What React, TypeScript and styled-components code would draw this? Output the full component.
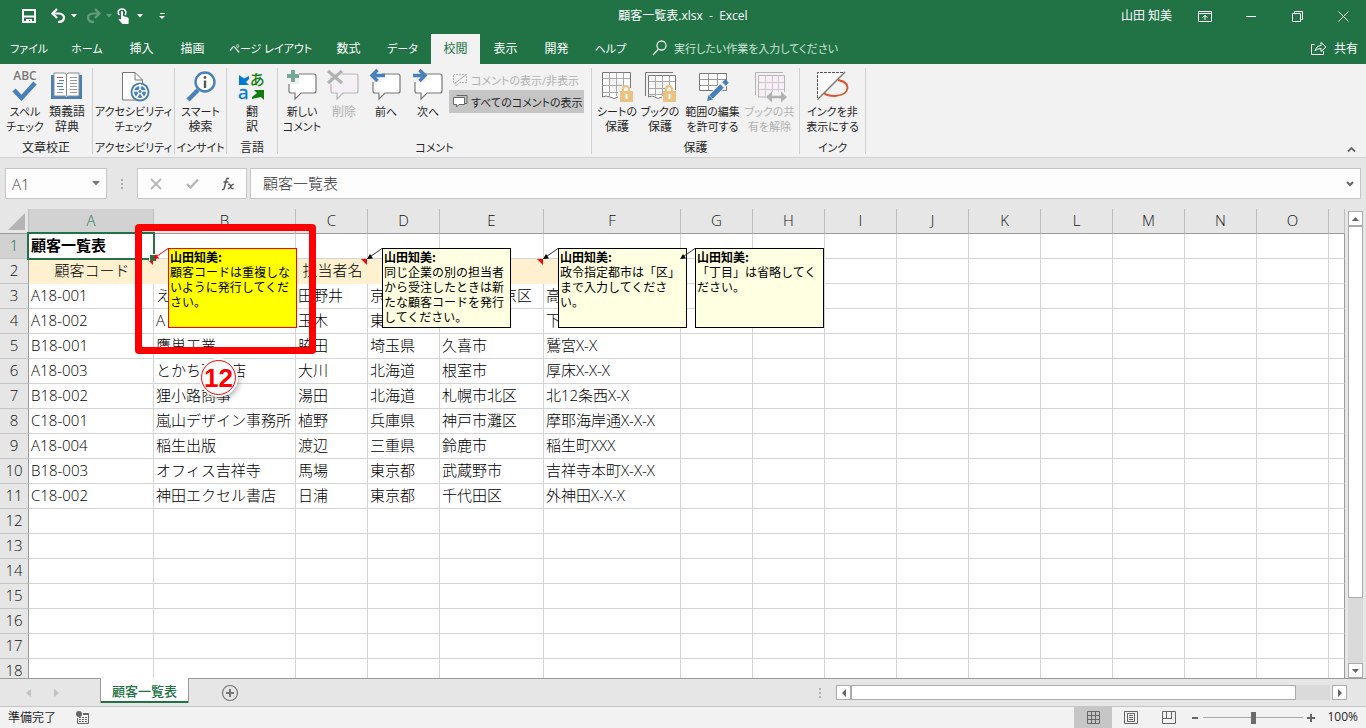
import React from "react";
import styled, { createGlobalStyle, css } from "styled-components";

const GREEN = "#217346";
const BLUE = "#4a80ba";
const GRAY = "#777777";

const GlobalStyle = createGlobalStyle`
  * { box-sizing: border-box; }
  body {
    margin: 0;
    font-family: "Open Sans", "Noto Sans CJK JP", sans-serif;
    font-size: 12px;
    font-feature-settings: "palt";
    color: #262626;
    overflow: hidden;
  }
  button, input {
    font: inherit;
    font-feature-settings: inherit;
    color: inherit;
    border: 0;
    padding: 0;
    margin: 0;
    background: none;
    border-radius: 0;
    outline: none;
  }
  svg { display: block; flex: none; overflow: visible; }
`;

const App = styled.div`
  display: flex;
  flex-direction: column;
  height: 100vh;
  background: #e6e6e6;
`;

/* ---------- title bar ---------- */
const TitleBar = styled.header`
  display: grid;
  grid-template-columns: 1fr auto 1fr;
  align-items: center;
  height: 32px;
  background: ${GREEN};
  color: #fff;
`;
const QuickAccess = styled.div`
  display: flex;
  align-items: center;
  padding-left: 21px;
`;
const QuickButton = styled.button<{ $w: number; $dim?: boolean }>`
  display: flex;
  width: ${(p) => p.$w}px;
  height: 32px;
  align-items: center;
  opacity: ${(p) => (p.$dim ? 0.3 : 1)};
`;
const FileTitle = styled.h1`
  margin: 0;
  padding-bottom: 2px;
  font-size: 12px;
  font-weight: 400;
  white-space: pre;
`;
const WindowControls = styled.div`
  display: flex;
  align-items: center;
  justify-content: flex-end;
`;
const UserName = styled.button`
  margin-right: 10px;
  padding-bottom: 2px;
  color: #fff;
`;
const WindowButton = styled.button`
  display: flex;
  width: 46px;
  height: 32px;
  align-items: center;
  justify-content: center;
`;

/* ---------- ribbon tabs ---------- */
const TabBar = styled.nav`
  display: flex;
  align-items: flex-end;
  height: 32px;
  background: ${GREEN};
  color: #fff;
`;
const Tab = styled.button<{ $w: number; $active?: boolean }>`
  width: ${(p) => p.$w}px;
  height: 30px;
  padding-bottom: 2px;
  white-space: nowrap;
  ${(p) => p.$active && css`background: #f2f2f2; color: ${GREEN};`}
`;
const Search = styled.label`
  display: flex;
  align-items: center;
  gap: 6px;
  height: 30px;
  margin-left: 13px;
  padding-bottom: 2px;
  flex: 1;
  input { width: 220px; height: 24px; font-size: 11px; }
  input::placeholder { color: #cfe3d7; opacity: 1; }
`;
const Share = styled.button`
  display: flex;
  align-items: center;
  gap: 7px;
  height: 30px;
  padding: 0 8px 2px 0;
`;

/* ---------- ribbon ---------- */
const Ribbon = styled.section`
  display: flex;
  height: 94px;
  background: #f2f2f2;
  border-bottom: 1px solid #d2d2d2;
`;
const Group = styled.div<{ $w: number }>`
  display: flex;
  flex-direction: column;
  width: ${(p) => p.$w}px;
  height: 86px;
  margin-top: 4px;
  padding-top: 2px;
  border-right: 1px solid #d0d0d0;
`;
const GroupBody = styled.div<{ $start?: boolean }>`
  display: flex;
  justify-content: ${(p) => (p.$start ? "flex-start" : "center")};
  padding-left: ${(p) => (p.$start ? 3 : 0)}px;
  flex: 1;
`;
const GroupLabel = styled.div`
  height: 13px;
  line-height: 13px;
  text-align: center;
  white-space: nowrap;
`;
const Line = styled.span<{ $kana: boolean; $block?: boolean }>`
  display: ${(p) => (p.$block ? "block" : "inline")};
  font-size: ${(p) => (p.$kana ? 11 : 12)}px;
`;
const BigButton = styled.button<{ $w: number; $dim?: boolean }>`
  display: flex;
  flex-direction: column;
  align-items: center;
  width: ${(p) => p.$w}px;
  line-height: 15px;
  white-space: nowrap;
  color: ${(p) => (p.$dim ? "#b1b1b1" : "#262626")};
  svg { margin-bottom: 2px; }
`;
const SmallStack = styled.div`
  display: flex;
  flex-direction: column;
  width: 135px;
`;
const SmallButton = styled.button<{ $on?: boolean; $dim?: boolean }>`
  display: flex;
  align-items: center;
  gap: 3px;
  height: ${(p) => (p.$on ? 23 : 20)}px;
  padding-left: 4px;
  font-size: 11px;
  white-space: nowrap;
  background: ${(p) => (p.$on ? "#c5c5c5" : "transparent")};
  color: ${(p) => (p.$dim ? "#b1b1b1" : "#262626")};
`;
const Collapse = styled.button`
  margin: auto 10px 4px auto;
`;

/* ---------- formula bar ---------- */
const FormulaBar = styled.section`
  display: flex;
  height: 51px;
  padding: 10px 5px 10px 5px;
  font-size: 15px;
  font-weight: 300;
  font-feature-settings: normal;
`;
const Box = styled.div<{ $w?: number }>`
  display: flex;
  align-items: center;
  width: ${(p) => (p.$w ? `${p.$w}px` : "auto")};
  flex: ${(p) => (p.$w ? "none" : 1)};
  background: #fdfdfd;
  border: 1px solid #c6c6c6;
  input { flex: 1; min-width: 0; height: 28px; }
`;
const NameInput = styled.input`
  padding-left: 6px;
  color: #444;
`;
const FormulaInput = styled.input`
  padding: 0 0 2px 12px;
  color: #333;
`;
const Grip = styled.svg`
  margin: 10px 13px 0 13px;
`;
const FormulaButtons = styled(Box)`
  justify-content: space-around;
  margin-right: 3px;
`;
const SideButton = styled.button`
  width: 20px;
  display: flex;
  justify-content: center;
`;

/* ---------- sheet ---------- */
const Work = styled.main`
  display: flex;
  flex: 1;
  min-height: 0;
`;
const Canvas = styled.div`
  position: relative;
  flex: 1;
  overflow: hidden;
`;
const Grid = styled.table`
  table-layout: fixed;
  width: 100%;
  border-collapse: separate;
  border-spacing: 0;
  font-size: 15px;
  font-feature-settings: normal;
`;
const ColHead = styled.th<{ $active?: boolean }>`
  height: 25px;
  padding: 0 0 2px;
  line-height: 22px;
  font-weight: 300;
  color: ${(p) => (p.$active ? GREEN : "#111")};
  background: ${(p) => (p.$active ? "#d2d2d2" : "#e6e6e6")};
  border-right: 1px solid #bdbdbd;
  border-bottom: 1px solid #9b9b9b;
`;
const Corner = styled(ColHead)`
  svg { margin: 3px 0 0 8px; }
`;
const RowHead = styled.th<{ $active?: boolean }>`
  height: 25px;
  padding: 0 0 2px;
  line-height: 22px;
  font-weight: 300;
  color: ${(p) => (p.$active ? GREEN : "#111")};
  background: ${(p) => (p.$active ? "#d2d2d2" : "#e6e6e6")};
  border-right: 1px solid #9b9b9b;
  border-bottom: 1px solid #c4c4c4;
`;
const Cell = styled.td<{ $head?: boolean; $title?: boolean; $last?: boolean }>`
  position: relative;
  height: 25px;
  padding: 0 0 2px 2px;
  line-height: 22px;
  white-space: nowrap;
  font-weight: ${(p) => (p.$title ? 700 : 300)};
  color: #000;
  text-align: ${(p) => (p.$head ? "center" : "left")};
  background: ${(p) => (p.$head ? "#fff0d0" : "#fff")};
  border-right: 1px solid ${(p) => (p.$head ? "#fff0d0" : p.$last ? "#9b9b9b" : "#d4d4d4")};
  border-bottom: 1px solid ${(p) => (p.$head ? "#fff0d0" : "#d4d4d4")};
`;
const Flag = styled.i`
  position: absolute;
  top: 0;
  right: 0;
  border-top: 6px solid #f00;
  border-left: 6px solid transparent;
`;
const Selection = styled.div`
  position: absolute;
  z-index: 1;
  inset: -2px;
  border: 2px solid ${GREEN};
  &::after {
    content: "";
    position: absolute;
    right: -3px;
    bottom: -3px;
    width: 6px;
    height: 6px;
    background: ${GREEN};
    border: solid #fff;
    border-width: 1px 0 0 1px;
  }
`;
const Note = styled.aside<{ $x: number; $hot?: boolean }>`
  position: absolute;
  z-index: 2;
  left: ${(p) => p.$x}px;
  top: 39px;
  width: 129px;
  height: 80px;
  padding: 0 1px;
  border: 1px solid ${(p) => (p.$hot ? "#f00" : "#000")};
  background: ${(p) => (p.$hot ? "#ff0" : "#ffffe1")};
  color: #000;
  font-family: "Noto Sans CJK JP", sans-serif;
  line-height: 15px;
  font-feature-settings: normal;
  white-space: pre;
  b { display: block; }
`;
const Leader = styled.svg<{ $x: number }>`
  position: absolute;
  z-index: 2;
  left: ${(p) => p.$x}px;
  top: 39px;
`;
const Highlight = styled.div`
  position: absolute;
  z-index: 3;
  left: 135px;
  top: 15px;
  width: 181px;
  height: 130px;
  border: 7px solid #f00;
  border-radius: 4px;
`;
const StepBadge = styled.div`
  position: absolute;
  z-index: 3;
  left: 201px;
  top: 151px;
  width: 35px;
  height: 35px;
  border: 1px solid #f00;
  border-radius: 50%;
  background: #fff;
  box-shadow: 0 0 0 2px #fff, 2px 3px 6px rgba(0, 0, 0, 0.4);
  color: #f00;
  font: 700 26px/34px "Liberation Sans Narrow", "Liberation Sans", sans-serif;
  text-align: center;
`;

/* ---------- scroll bars ---------- */
const VScroll = styled.div`
  display: flex;
  flex-direction: column;
  width: 15px;
  margin: 2px 3px 0 3px;
  background: #dadada;
`;
const ArrowButton = styled.button`
  display: flex;
  align-items: center;
  justify-content: center;
  flex: none;
  width: 15px;
  height: 15px;
  background: #fff;
  border: 1px solid #ababab;
`;
const VThumb = styled.div`
  flex: 373;
  background: #fff;
  border: 1px solid #ababab;
`;
const VTrack = styled.div`
  flex: 65;
`;
const SheetBar = styled.footer`
  display: flex;
  height: 29px;
  border-top: 1px solid #9b9b9b;
  border-bottom: 1px solid #c6c6c6;
`;
const SheetNav = styled.div`
  display: flex;
  align-items: center;
  gap: 23px;
  width: 100px;
  padding-left: 26px;
`;
const SheetTab = styled.button`
  width: 89px;
  height: 25px;
  margin-top: -1px;
  background: #fff;
  border: solid #9b9b9b;
  border-width: 0 1px;
  box-shadow: inset 0 -2px 0 ${GREEN};
  color: ${GREEN};
  font-size: 13px;
  font-weight: 500;
  font-feature-settings: normal;
`;
const AddSheet = styled.button`
  margin-left: 32px;
`;
const HScroll = styled.div`
  display: flex;
  align-items: center;
  width: 528px;
  margin: 0 19px 0 auto;
`;
const HTrack = styled.div`
  display: flex;
  flex: 1;
  height: 15px;
  margin-right: 2px;
  background: #dadada;
`;
const HThumb = styled.div`
  width: 93%;
  background: #fff;
  border: 1px solid #ababab;
`;

/* ---------- status bar ---------- */
const StatusBar = styled.footer`
  display: flex;
  align-items: center;
  height: 21px;
  padding: 0 8px;
  background: #f2f2f2;
`;
const Ready = styled.span`
  padding-bottom: 2px;
`;
const ViewButtons = styled.div`
  display: flex;
  margin-left: auto;
`;
const ViewButton = styled.button<{ $on?: boolean }>`
  display: flex;
  align-items: center;
  justify-content: center;
  width: 38px;
  height: 21px;
  background: ${(p) => (p.$on ? "#c6c6c6" : "transparent")};
`;
const ZoomButton = styled.button`
  width: 14px;
  display: flex;
  justify-content: center;
`;
const ZoomRange = styled.input`
  appearance: none;
  width: 100px;
  height: 12px;
  margin: 0 1px;
  background: linear-gradient(#ababab, #ababab) center / 100% 1px no-repeat;
  &::-webkit-slider-thumb {
    appearance: none;
    width: 5px;
    height: 12px;
    background: #6b6b6b;
  }
`;
const ZoomText = styled.button`
  width: 33px;
  margin-left: 7px;
  padding-bottom: 2px;
  text-align: right;
`;

/* ---------- icons ---------- */
const Caret = ({ c = "#fff", x = 0 }: { c?: string; x?: number }) => (
  <svg width={6 + x} height="4" viewBox={`${-x} 0 ${6 + x} 4`}><path d="M0 0h6L3 3.5z" fill={c} /></svg>
);
const Icon = ({ children }: { children: React.ReactNode }) => (
  <svg width="34" height="32" viewBox="0 0 34 32" fill="none">{children}</svg>
);
const bubble = "M6 4H29Q31 4 31 6V21Q31 23 29 23H16L10 29V23H6Q4 23 4 21V6Q4 4 6 4Z";

const SpellIcon = () => (
  <Icon>
    <text x="17" y="10" textAnchor="middle" fontFamily="Open Sans" fontSize="12" fontWeight="600" fill={GRAY}>ABC</text>
    <path d="M6 20L13.500 28L27 13" stroke={BLUE} strokeWidth="4.500" />
  </Icon>
);
const BookIcon = () => (
  <Icon>
    <path d="M1 5H32V29H1z" fill={BLUE} />
    <path d="M4 3H14Q16.500 3 16.500 5Q16.500 3 19 3H29V26H19Q17 26 16.500 27Q16 26 14 26H4z" fill="#fff" stroke="#8a8a8a" />
    <path d="M16.500 5V26" stroke="#8a8a8a" />
    <path d="M7 7.500H13" stroke="#d35230" />
    <path d="M9 10.500H14M7 13.500H13M9 19.500H14M7 16.500H13" stroke={BLUE} />
    <path d="M7 22.500H13M20 7.500H27M20 10.500H27M20 13.500H27M20 16.500H27M20 19.500H27M20 22.500H27" stroke="#9a9a9a" />
  </Icon>
);
const AccessIcon = () => (
  <Icon>
    <path d="M5.500 2.500H18L25.500 10V30H5.500z" fill="#fff" stroke={GRAY} />
    <path d="M18 2.500V10H25.500" stroke={GRAY} />
    <circle cx="23" cy="22" r="9.500" fill={BLUE} />
    <circle cx="23" cy="22" r="6.800" stroke="#fff" strokeWidth="1.600" />
    <path d="M23 14V22M17 21H29M23 22L19 28M23 22L27 28" stroke="#fff" strokeWidth="1.600" />
    <circle cx="23" cy="21.500" r="2" fill={BLUE} stroke="#fff" />
  </Icon>
);
const LookupIcon = () => (
  <Icon>
    <path d="M4 30L14 20" stroke={BLUE} strokeWidth="4.500" />
    <circle cx="21" cy="12" r="9.500" fill="#fff" stroke={BLUE} strokeWidth="2.400" />
    <path d="M21 10.500V18" stroke="#555" strokeWidth="2.400" />
    <circle cx="21" cy="7.500" r="1.400" fill="#555" />
  </Icon>
);
const TranslateIcon = () => (
  <Icon>
    <text x="3" y="29" fontFamily="Open Sans" fontSize="19" fill="#0078d7" stroke="#0078d7" strokeWidth="0.400">a</text>
    <text x="15" y="15" fontFamily="Noto Sans CJK JP" fontSize="15" fontWeight="500" fill="#107c10">あ</text>
    <path d="M4 5V15H14L11 12L14 9V6L9 8.500z" fill="#0078d7" />
    <path d="M19 20H29V30L26 27L17 29V27L22 23z" fill="#107c10" />
  </Icon>
);
const CommentIcon = ({ kind }: { kind: "new" | "del" | "prev" | "next" }) => {
  const dim = kind === "del";
  return (
    <Icon>
      <path d={bubble} fill={dim ? "#f6f0f6" : "#fff"} stroke={dim ? "#b5b5b5" : GRAY} strokeWidth="1.200" />
      {kind === "new" && <><path d="M1 0h13v14H1z" fill="#f2f2f2" /><path d="M8 0V12M2 6H14" stroke="#76a797" strokeWidth="4" /></>}
      {kind === "del" && <><path d="M0 0h15v14H0z" fill="#f2f2f2" opacity=".7" /><path d="M1 1L15 13M15 1L1 13" stroke="#b1b1b1" strokeWidth="3" /></>}
      {kind === "prev" && <><path d="M1 0h12v12H1z" fill="#f2f2f2" /><path d="M3 5.500H16M8.500 0L3 5.500L8.500 11" stroke={BLUE} strokeWidth="3.400" /></>}
      {kind === "next" && <><path d="M1 0h13v12H1z" fill="#f2f2f2" /><path d="M2 5.500H14M8.500 0L14 5.500L8.500 11" stroke={BLUE} strokeWidth="3.400" /></>}
    </Icon>
  );
};
const ProtectIcon = ({ double }: { double?: boolean }) => (
  <Icon>
    {double && <path d="M2.500 26V2.500H30" stroke={GRAY} />}
    <path d={double ? "M5.500 5.500H32.500V20M5.500 5.500V27Q9 25 12 27Q15 30 19 27" : "M2.500 2.500H30.500V18M2.500 2.500V27Q6 25 10 27Q14 30 18 27"} fill="#fff" stroke={GRAY} />
    <path d={double ? "M5.500 11.500H32M5.500 18.500H24M5.500 24.500H19M12.500 5.500V26M19.500 5.500V26M26.500 5.500V16" : "M2.500 8.500H30M2.500 15.500H22M2.500 22.500H18M9.500 2.500V26M16.500 2.500V26M23.500 2.500V16"} stroke="#a9a9a9" />
    <path d="M23 22V19Q23 16 26 16Q29 16 29 19V22" stroke="#eac282" strokeWidth="2" />
    <path d="M20 21H33V32H20z" fill="#eac282" />
    <path d="M26.500 24V29" stroke="#fff" strokeWidth="2" />
  </Icon>
);
const RangeIcon = () => (
  <Icon>
    <path d="M3.500 3.500H30.500V20.500H3.500z" fill="#fff" stroke={GRAY} />
    <path d="M3.500 9.500H30M3.500 15.500H30M12.500 3.500V20M21.500 3.500V20" stroke="#999" />
    <path d="M13 29L29 13" stroke="#f2f2f2" strokeWidth="7" />
    <path d="M15 27L26 16" stroke={BLUE} strokeWidth="5" />
    <path d="M11 31L12.500 25L17 29.500z" fill={BLUE} />
    <path d="M28 14L31 11" stroke={BLUE} strokeWidth="5" />
  </Icon>
);
const UnshareIcon = () => (
  <Icon>
    <path d="M2.500 25V2.500H30" stroke="#b5b5b5" />
    <path d="M5.500 5.500H31.500V27H5.500z" fill="#f6f0f6" stroke="#b5b5b5" />
    <path d="M5.500 12.500H31M5.500 19.500H31M12.500 5.500V27M19.500 5.500V27M25.500 5.500V27" stroke="#cfc9cf" />
    <path d="M13 22H34V32H13z" fill="#f2f2f2" />
    <path d="M16 27H32" stroke="#b1b1b1" strokeWidth="2.600" />
    <path d="M13 27L19 21.500V32.500zM34 27L28 21.500V32.500z" fill="#b1b1b1" />
  </Icon>
);
const InkIcon = () => (
  <Icon>
    <path d="M1.500 29V2.500H29z" fill="#fff" />
    <path d="M1.500 28V2.500H28" stroke="#555" strokeDasharray="3 1" />
    <path d="M1.500 29.500L29 2" stroke={GRAY} strokeWidth="1.500" />
    <path d="M22 10Q32 12 31.500 18Q31 25 19 26Q11 26 8 23" stroke="#d9532f" strokeWidth="1.800" />
  </Icon>
);

/* ---------- data ---------- */
const TABS: [string, number][] = [
  ["ファイル", 58], ["ホーム", 58], ["挿入", 51], ["描画", 51], ["ページ レイアウト", 105], ["数式", 51],
  ["データ", 57], ["校閲", 49], ["表示", 51], ["開発", 51], ["ヘルプ", 57],
];
const COLS: [string, number][] = [
  ["A", 125], ["B", 142], ["C", 72], ["D", 72], ["E", 104], ["F", 137], ["G", 72], ["H", 72],
  ["I", 72], ["J", 72], ["K", 72], ["L", 72], ["M", 72], ["N", 72], ["O", 72],
];
const ROWS: string[][] = [
  ["顧客一覧表"],
  ["顧客コード", "", "担当者名", "", "", ""],
  ["A18-001", "え", "田野井", "京", "京都市右京区", "高"],
  ["A18-002", "A", "玉木", "東", "", "下"],
  ["B18-001", "鷹巣工業", "脇田", "埼玉県", "久喜市", "鷲宮X-X"],
  ["A18-003", "とかち百貨店", "大川", "北海道", "根室市", "厚床X-X-X"],
  ["B18-002", "狸小路商事", "湯田", "北海道", "札幌市北区", "北12条西X-X"],
  ["C18-001", "嵐山デザイン事務所", "植野", "兵庫県", "神戸市灘区", "摩耶海岸通X-X-X"],
  ["A18-004", "稲生出版", "渡辺", "三重県", "鈴鹿市", "稲生町XXX"],
  ["B18-003", "オフィス吉祥寺", "馬場", "東京都", "武蔵野市", "吉祥寺本町X-X-X"],
  ["C18-002", "神田エクセル書店", "日浦", "東京都", "千代田区", "外神田X-X-X"],
];
const NOTES = [
  { x: 168, hot: true, text: "顧客コードは重複しな\nいように発行してくだ\nさい。" },
  { x: 382, text: "同じ企業の別の担当者\nから受注したときは新\nたな顧客コードを発行\nしてください。" },
  { x: 558, text: "政令指定都市は「区」\nまで入力してくださ\nい。" },
  { x: 695, text: "「丁目」は省略してく\nださい。" },
];
const FLAGGED = [0, 2, 4, 5];

/* Kana glyphs are set one step smaller than kanji-only captions. */
const hasKana = (s: string) => /[ぁ-ヶ]/.test(s);
const Caption = ({ text }: { text: string }) => (
  <span>{text.split("\n").map((l) => <Line key={l} $block $kana={hasKana(l)}>{l}</Line>)}</span>
);
const Label = ({ text }: { text: string }) => (
  <GroupLabel><Line $kana={hasKana(text)}>{text}</Line></GroupLabel>
);

export default function ExcelWindow() {
  return (
    <App>
      <GlobalStyle />
      <TitleBar>
        <QuickAccess>
          <QuickButton $w={30} aria-label="上書き保存">
            <svg width="16" height="16" viewBox="0 0 16 16" fill="none" stroke="#fff" strokeWidth="2">
              <path d="M2 2H14V14H2zM2 8.500H14" /><path d="M5 11H11V14H9V12H8V14H5z" fill="#fff" stroke="none" />
            </svg>
          </QuickButton>
          <QuickButton $w={35} aria-label="元に戻す">
            <svg width="16" height="16" viewBox="0 0 16 16" fill="none" stroke="#fff" strokeWidth="2.200">
              <path d="M6 1L1.500 5.500L6 10M2 5.500H8Q13 6 13 10Q12.500 14 7 14" />
            </svg>
            <Caret x={4} />
          </QuickButton>
          <QuickButton $w={31} $dim aria-label="やり直し">
            <svg width="16" height="16" viewBox="0 0 16 16" fill="none" stroke="#fff" strokeWidth="2.200">
              <path d="M9 1L13.500 5.500L9 10M13 5.500H7Q2 6 2 10Q2.500 14 8 14" />
            </svg>
            <Caret x={4} />
          </QuickButton>
          <QuickButton $w={42} aria-label="タッチ/マウス モードの切り替え">
            <svg width="14" height="17" viewBox="0 0 14 17">
              <path d="M2.500 7Q.800 5.500 1.200 3.500Q2 1 5 1Q8 1 8.800 3.500Q9 5.500 8 7" fill="none" stroke="#fff" strokeWidth="1.500" />
              <path d="M4 3.500Q5 2.600 6 3.500V8L11 9.500Q12 10 11.700 12L11.500 16H5.500L1.500 11.500Q1.500 10 4 11.500z" fill="#fff" />
            </svg>
            <Caret x={6} />
          </QuickButton>
          <QuickButton $w={10} aria-label="クイック アクセス ツール バーのユーザー設定">
            <svg width="7" height="8" viewBox="0 0 7 8"><path d="M1 1.500H6" stroke="#fff" /><path d="M0 4H6L3 7z" fill="#fff" /></svg>
          </QuickButton>
        </QuickAccess>
        <FileTitle>顧客一覧表.xlsx  -  Excel</FileTitle>
        <WindowControls>
          <UserName>山田 知美</UserName>
          <WindowButton aria-label="リボンの表示オプション">
            <svg width="14" height="11" viewBox="0 0 14 11" fill="none" stroke="#fff"><path d="M.500.500H13.500V10.500H.500zM.500 2.500H13.500M7 9V4.500M4.500 6.500L7 4.500L9.500 6.500" /></svg>
          </WindowButton>
          <WindowButton aria-label="最小化"><svg width="10" height="1"><rect width="10" height="1" fill="#fff" /></svg></WindowButton>
          <WindowButton aria-label="元に戻す (縮小)">
            <svg width="11" height="11" viewBox="0 0 11 11" fill="none" stroke="#fff"><path d="M.500 2.500H8.500V10.500H.500zM2.500 2V.500H10.500V8.500H9" /></svg>
          </WindowButton>
          <WindowButton aria-label="閉じる">
            <svg width="11" height="11" viewBox="0 0 11 11" stroke="#fff"><path d="M.500.500L10.500 10.500M10.500.500L.500 10.500" /></svg>
          </WindowButton>
        </WindowControls>
      </TitleBar>

      <TabBar>
        {TABS.map(([t, w]) => (
          <Tab key={t} $w={w} $active={t === "校閲"}><Line $kana={hasKana(t)}>{t}</Line></Tab>
        ))}
        <Search>
          <svg width="16" height="16" viewBox="0 0 16 16" fill="none" stroke="#e4efe8" strokeWidth="1.300"><circle cx="9.500" cy="5.500" r="4.500" /><path d="M6.500 9L1 15" /></svg>
          <input placeholder="実行したい作業を入力してください" aria-label="実行したい作業を入力してください" />
        </Search>
        <Share>
          <svg width="16" height="14" viewBox="0 0 16 14" fill="none" stroke="#fff"><path d="M3.500 3.500H.500V13.500H12.500V10M4 10Q5 5 10 4.500V1.500L15 6L10 10.500V7.500Q6 7.500 4 10z" /></svg>
          共有
        </Share>
      </TabBar>

      <Ribbon>
        <Group $w={93}>
          <GroupBody>
            <BigButton $w={42}><SpellIcon /><Caption text={"スペル\nチェック"} /></BigButton>
            <BigButton $w={42}><BookIcon /><Caption text={"類義語\n辞典"} /></BigButton>
          </GroupBody>
          <Label text="文章校正" />
        </Group>
        <Group $w={82}>
          <GroupBody><BigButton $w={76}><AccessIcon /><Caption text={"アクセシビリティ\nチェック"} /></BigButton></GroupBody>
          <Label text="アクセシビリティ" />
        </Group>
        <Group $w={52}>
          <GroupBody><BigButton $w={46}><LookupIcon /><Caption text={"スマート\n検索"} /></BigButton></GroupBody>
          <Label text="インサイト" />
        </Group>
        <Group $w={51}>
          <GroupBody><BigButton $w={42}><TranslateIcon /><Caption text={"翻\n訳"} /></BigButton></GroupBody>
          <Label text="言語" />
        </Group>
        <Group $w={314}>
          <GroupBody $start>
            <BigButton $w={42}><CommentIcon kind="new" /><Caption text={"新しい\nコメント"} /></BigButton>
            <BigButton $w={42} $dim disabled><CommentIcon kind="del" /><Caption text="削除" /></BigButton>
            <BigButton $w={42}><CommentIcon kind="prev" /><Caption text="前へ" /></BigButton>
            <BigButton $w={42}><CommentIcon kind="next" /><Caption text="次へ" /></BigButton>
            <SmallStack>
              <SmallButton $dim disabled>
                <svg width="15" height="15" viewBox="0 0 15 15" fill="none" stroke="#b1b1b1"><path d="M.500 2V9.500H3V13L6.500 9.500H13.500V1.500H1" strokeDasharray="2 1" /><path d="M1 11L14 1" /></svg>
                コメントの表示/非表示
              </SmallButton>
              <SmallButton $on>
                <svg width="15" height="15" viewBox="0 0 15 15" fill="#fff" stroke="#666"><path d="M3.500 1.500H14V9.500H12" fill="none" /><path d="M2 3.500H11.500V10.500H6L3.500 13V10.500H.500V3.500z" /></svg>
                すべてのコメントの表示
              </SmallButton>
            </SmallStack>
          </GroupBody>
          <Label text="コメント" />
        </Group>
        <Group $w={208}>
          <GroupBody>
            <BigButton $w={43}><ProtectIcon /><Caption text={"シートの\n保護"} /></BigButton>
            <BigButton $w={43}><ProtectIcon double /><Caption text={"ブックの\n保護"} /></BigButton>
            <BigButton $w={62}><RangeIcon /><Caption text={"範囲の編集\nを許可する"} /></BigButton>
            <BigButton $w={52} $dim disabled><UnshareIcon /><Caption text={"ブックの共\n有を解除"} /></BigButton>
          </GroupBody>
          <Label text="保護" />
        </Group>
        <Group $w={66}>
          <GroupBody><BigButton $w={60}><InkIcon /><Caption text={"インクを非\n表示にする"} /></BigButton></GroupBody>
          <Label text="インク" />
        </Group>
        <Collapse aria-label="リボンを折りたたむ">
          <svg width="9" height="7" viewBox="0 0 9 7" fill="none" stroke="#666" strokeWidth="1.800"><path d="M1 5.500L4.500 2L8 5.500" /></svg>
        </Collapse>
      </Ribbon>

      <FormulaBar>
        <Box $w={102}>
          <NameInput defaultValue="A1" aria-label="名前ボックス" />
          <SideButton aria-label="名前の一覧"><svg width="8" height="5"><path d="M0 0H8L4 4.500z" fill="#777" /></svg></SideButton>
        </Box>
        <Grip width="4" height="12" viewBox="0 0 4 12"><path d="M1 1h2v2H1zM1 5h2v2H1zM1 9h2v2H1z" fill="#aaa" /></Grip>
        <FormulaButtons $w={110}>
          <SideButton aria-label="キャンセル"><svg width="12" height="12" fill="none" stroke="#b8b8b8" strokeWidth="1.800"><path d="M1 1L11 11M11 1L1 11" /></svg></SideButton>
          <SideButton aria-label="入力"><svg width="13" height="12" fill="none" stroke="#b8b8b8" strokeWidth="2.400"><path d="M1 6L4.500 9.500L12 1.500" /></svg></SideButton>
          <SideButton aria-label="関数の挿入">
            <svg width="14" height="14" viewBox="0 0 14 14" fill="none" stroke="#555" strokeWidth="1.400">
              <path d="M8 1.500Q6 .500 5.300 3L3.300 11Q2.800 13.200 1 12.500M2.500 5H7.500M7 7.500Q8.500 6.500 9.300 8.500L10 10.500Q10.800 12.300 12.500 11.300M12.800 7.500Q11.500 7 9.800 9.500Q8.300 12 6.800 11.300" />
            </svg>
          </SideButton>
        </FormulaButtons>
        <Box>
          <FormulaInput defaultValue="顧客一覧表" aria-label="数式バー" />
          <SideButton aria-label="数式バーの展開"><svg width="8" height="6" viewBox="0 0 8 6" fill="none" stroke="#666" strokeWidth="2"><path d="M1 1L4 4L7 1" /></svg></SideButton>
        </Box>
      </FormulaBar>

      <Work>
        <Canvas>
          <Grid>
            <colgroup>
              <col style={{ width: 29 }} />
              {COLS.map(([n, w]) => <col key={n} style={{ width: w }} />)}
              <col />
            </colgroup>
            <thead>
              <tr>
                <Corner><svg width="18" height="18"><path d="M17 0V17H0z" fill="#b4b4b4" /></svg></Corner>
                {COLS.map(([n]) => <ColHead key={n} scope="col" $active={n === "A"}>{n}</ColHead>)}
                <ColHead />
              </tr>
            </thead>
            <tbody>
              {Array.from({ length: 18 }, (_, r) => (
                <tr key={r}>
                  <RowHead scope="row" $active={r === 0}>{r + 1}</RowHead>
                  {COLS.map(([n], c) => (
                    <Cell key={n} $head={r === 1 && c < 6} $title={r === 0}>
                      {ROWS[r]?.[c]}
                      {r === 1 && FLAGGED.includes(c) && <Flag />}
                      {r === 0 && c === 0 && <Selection />}
                    </Cell>
                  ))}
                  <Cell $last />
                </tr>
              ))}
            </tbody>
          </Grid>
          {NOTES.map((n) => (
            <React.Fragment key={n.x}>
              <Leader $x={n.x - 16} width="17" height="14" viewBox="0 0 17 14">
                <path d="M16 .500L3 9.500" stroke={n.hot ? "#f00" : "#333"} fill="none" />
                <path d="M1 11L4 6L7 10.500z" fill={n.hot ? "#f00" : "#000"} />
              </Leader>
              <Note $x={n.x} $hot={n.hot}><b>山田知美:</b>{n.text}</Note>
            </React.Fragment>
          ))}
          <Highlight />
          <StepBadge>12</StepBadge>
        </Canvas>
        <VScroll>
          <ArrowButton aria-label="上へスクロール"><svg width="7" height="4"><path d="M0 4L3.500 0L7 4z" fill="#666" /></svg></ArrowButton>
          <VThumb />
          <VTrack />
          <ArrowButton aria-label="下へスクロール"><svg width="7" height="4"><path d="M0 0L3.500 4L7 0z" fill="#666" /></svg></ArrowButton>
        </VScroll>
      </Work>

      <SheetBar>
        <SheetNav>
          <svg width="5" height="8"><path d="M5 0V8L0 4z" fill="#c0c0c0" /></svg>
          <svg width="5" height="8"><path d="M0 0V8L5 4z" fill="#c0c0c0" /></svg>
        </SheetNav>
        <SheetTab>顧客一覧表</SheetTab>
        <AddSheet aria-label="新しいシート">
          <svg width="18" height="18" viewBox="0 0 18 18" fill="none" stroke="#777"><circle cx="9" cy="9" r="7.500" strokeWidth="1.200" /><path d="M9 5V13M5 9H13" strokeWidth="2" /></svg>
        </AddSheet>
        <HScroll>
          <svg width="17" height="12" viewBox="0 0 17 12"><path d="M0 1h2v2H0zM0 5h2v2H0zM0 9h2v2H0z" fill="#b0b0b0" /></svg>
          <ArrowButton aria-label="左へスクロール"><svg width="4" height="8"><path d="M4 0V8L0 4z" fill="#666" /></svg></ArrowButton>
          <HTrack><HThumb /></HTrack>
          <ArrowButton aria-label="右へスクロール"><svg width="4" height="8"><path d="M0 0V8L4 4z" fill="#666" /></svg></ArrowButton>
        </HScroll>
      </SheetBar>

      <StatusBar>
        <Ready>準備完了</Ready>
        <svg width="33" height="14" viewBox="-20 0 33 14" fill="none" stroke="#666"><circle cx="3" cy="3" r="3" fill="#666" stroke="none" /><path d="M7 2.500H12.500V12.500H1.500V7M7 3.500H12" /><path d="M3 6.500H11M3 8.500H11M3 10.500H11" strokeDasharray="2 1" /></svg>
        <ViewButtons>
          <ViewButton $on aria-label="標準"><svg width="13" height="13" fill="none" stroke="#666"><path d="M.500.500H12.500V12.500H.500zM4.500 0V13M8.500 0V13M0 4.500H13M0 8.500H13" /></svg></ViewButton>
          <ViewButton aria-label="ページ レイアウト"><svg width="14" height="13" fill="none" stroke="#666"><path d="M.500.500H13.500V12.500H.500zM3.500 2.500H10.500V10.500H3.500zM5 4.500H9M5 6.500H9M5 8.500H9" /></svg></ViewButton>
          <ViewButton aria-label="改ページ プレビュー"><svg width="14" height="13" fill="none" stroke="#666"><path d="M.500.500H13.500V12.500H.500zM4.500 0V7.500M9.500 0V7.500M0 7.500H10" /></svg></ViewButton>
        </ViewButtons>
        <ZoomButton aria-label="縮小"><svg width="6" height="2"><rect width="6" height="2" fill="#666" /></svg></ZoomButton>
        <ZoomRange type="range" min="10" max="190" defaultValue="100" aria-label="ズーム" />
        <ZoomButton aria-label="拡大"><svg width="8" height="8" stroke="#666" strokeWidth="2"><path d="M4 0V8M0 4H8" /></svg></ZoomButton>
        <ZoomText>100%</ZoomText>
      </StatusBar>
    </App>
  );
}
